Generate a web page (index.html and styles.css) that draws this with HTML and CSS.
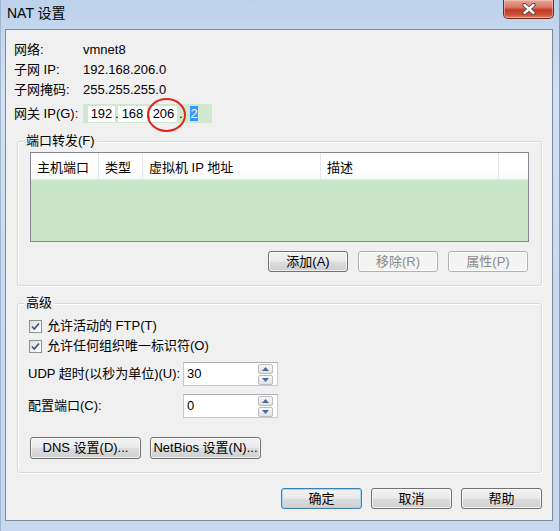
FILE: index.html
```html
<!DOCTYPE html>
<html lang="zh-CN">
<head>
<meta charset="utf-8">
<title>NAT 设置</title>
<link rel="stylesheet" href="styles.css">
</head>
<body>
<div class="window">
  <div class="titlebar">
    <span class="title">NAT 设置</span>
    <div class="close" aria-label="关闭">
      <svg width="16" height="12" viewBox="0 0 16 12">
        <path d="M3.5 2 L12.5 10 M12.5 2 L3.5 10" stroke="#5a3a36" stroke-width="4.2" stroke-linecap="round" fill="none"/>
        <path d="M3.5 2 L12.5 10 M12.5 2 L3.5 10" stroke="#ffffff" stroke-width="2.4" stroke-linecap="round" fill="none"/>
      </svg>
    </div>
  </div>
  <div class="client">
    <div class="info">
      <span class="lbl">网络:</span><span class="val">vmnet8</span>
      <span class="lbl">子网 IP:</span><span class="val">192.168.206.0</span>
      <span class="lbl">子网掩码:</span><span class="val">255.255.255.0</span>
      <span class="lbl gw">网关 IP(G):</span>
      <div class="ipfield">
        <span class="seg s1">192</span><span class="dot">.</span><span class="seg s2">168</span><span class="dot">.</span><span class="seg s3">206</span><span class="dot last">.</span><span class="sel">2</span>
        <span class="ring"></span>
      </div>
    </div>

    <div class="group g1">
      <span class="legend">端口转发(F)</span>
      <div class="lv">
        <div class="lv-head">
          <span class="col">主机端口</span>
          <span class="col">类型</span>
          <span class="col">虚拟机 IP 地址</span>
          <span class="col">描述</span>
          <span class="col last"></span>
        </div>
        <div class="lv-body"></div>
      </div>
      <div class="btnrow">
        <button class="btn w80">添加(A)</button>
        <button class="btn w80 disabled">移除(R)</button>
        <button class="btn w80 disabled">属性(P)</button>
      </div>
    </div>

    <div class="group g2">
      <span class="legend">高级</span>
      <div class="cb-row">
        <span class="cb"><svg width="11" height="11" viewBox="0 0 11 11"><path d="M2 5.5 L4.3 8 L9 2.5" stroke="#3f5488" stroke-width="1.8" fill="none"/></svg></span>
        <span>允许活动的 FTP(T)</span>
      </div>
      <div class="cb-row">
        <span class="cb"><svg width="11" height="11" viewBox="0 0 11 11"><path d="M2 5.5 L4.3 8 L9 2.5" stroke="#3f5488" stroke-width="1.8" fill="none"/></svg></span>
        <span>允许任何组织唯一标识符(O)</span>
      </div>
      <div class="spin-row first">
        <span class="spin-lbl">UDP 超时(以秒为单位)(U):</span>
        <div class="spin">
          <span class="spin-val">30</span>
          <div class="ud">
            <span class="udb"><svg width="7" height="4" viewBox="0 0 7 4"><path d="M0 4 L3.5 0 L7 4 Z" fill="#4a6aa5"/></svg></span>
            <span class="udb"><svg width="7" height="4" viewBox="0 0 7 4"><path d="M0 0 L3.5 4 L7 0 Z" fill="#4a6aa5"/></svg></span>
          </div>
        </div>
      </div>
      <div class="spin-row second">
        <span class="spin-lbl">配置端口(C):</span>
        <div class="spin">
          <span class="spin-val">0</span>
          <div class="ud">
            <span class="udb"><svg width="7" height="4" viewBox="0 0 7 4"><path d="M0 4 L3.5 0 L7 4 Z" fill="#4a6aa5"/></svg></span>
            <span class="udb"><svg width="7" height="4" viewBox="0 0 7 4"><path d="M0 0 L3.5 4 L7 0 Z" fill="#4a6aa5"/></svg></span>
          </div>
        </div>
      </div>
      <div class="dns-row">
        <button class="btn w111">DNS 设置(D)...</button>
        <button class="btn w111">NetBios 设置(N)...</button>
      </div>
    </div>

    <div class="footer">
      <button class="btn w81 default">确定</button>
      <button class="btn w81">取消</button>
      <button class="btn w81">帮助</button>
    </div>
  </div>
</div>
</body>
</html>
```

FILE: styles.css
```css
* { box-sizing: border-box; }
html, body { margin: 0; padding: 0; }
body {
  width: 560px;
  height: 531px;
  overflow: hidden;
  font-family: "Liberation Sans", "Noto Sans CJK SC", sans-serif;
  font-size: 13px;
  line-height: 16px;
  color: #000;
  background: linear-gradient(180deg, #bcd2eb 0%, #d2e2f4 18%, #c8daef 55%, #c6d9ee 100%);
}
.window {
  height: 531px;
  display: flex;
  flex-direction: column;
  border-left: 1px solid #9fb7d3;
  border-right: 1px solid #7f9bbf;
}
.titlebar {
  height: 29px;
  display: flex;
  align-items: flex-start;
  flex: none;
}
.title {
  padding-left: 6px;
  font-size: 14px;
  line-height: 27px;
}
.close {
  margin-left: auto;
  margin-right: 5px;
  width: 51px;
  height: 19px;
  border: 1px solid #6e2b22;
  border-top: none;
  border-radius: 0 0 5px 5px;
  background: linear-gradient(180deg, #e7a597 0%, #d97a66 40%, #c13a22 55%, #cf553b 85%, #e08a72 100%);
  box-shadow: inset 0 0 0 1px rgba(255, 220, 210, 0.45);
  display: flex;
  align-items: center;
  justify-content: center;
}
.client {
  margin-left: 4px;
  width: 548px;
  height: 492px;
  border: 1px solid #7c8b9b;
  background: #f0f0f0;
  padding-top: 10px;
  flex: none;
}
.info {
  display: grid;
  grid-template-columns: 69px auto;
  grid-template-rows: 20px 20px 20px 23px;
  align-items: center;
  padding-left: 8px;
  line-height: 20px;
}
.lbl.gw { align-self: end; line-height: 19px; }
.ipfield {
  align-self: end;
  position: relative;
  width: 129px;
  height: 19px;
  background: #cfe8cf;
  display: flex;
  align-items: center;
  padding-left: 5px;
  line-height: 16px;
}
.seg {
  background: #fff;
  height: 16px;
  text-align: center;
}
.s1 { width: 27px; }
.s2 { width: 29px; }
.s3 { width: 27px; }
.dot { width: 3px; text-align: center; }
.dot.last { width: 13px; text-align: left; padding-left: 2px; }
.sel {
  width: 8px;
  height: 15px;
  background: #3399ff;
  color: #fff;
  text-align: center;
  line-height: 15px;
}
.ring {
  position: absolute;
  left: 64px;
  top: -6px;
  width: 39px;
  height: 34px;
  border: 2.5px solid #e2231a;
  border-radius: 50%;
}
.group {
  position: relative;
  margin: 18px 10px 0 11px;
  border: 1px solid #d3dbe1;
  border-radius: 3px;
  box-shadow: inset 1px 1px 0 #fff, 1px 1px 0 #fff;
}
.legend {
  position: absolute;
  left: 6px;
  top: -10px;
  padding: 0 2px;
  background: #f0f0f0;
  line-height: 17px;
}
.g1 {
  height: 145px;
  padding: 10px 12px 0 12px;
}
.lv {
  height: 90px;
  border: 1px solid #828790;
  background: #c9e6c9;
  display: flex;
  flex-direction: column;
}
.lv-head {
  display: grid;
  grid-template-columns: 68px 44px 178px 178px 1fr;
  height: 27px;
  background: linear-gradient(180deg, #ffffff 0%, #ffffff 60%, #f7f8f9 100%);
  border-bottom: 1px solid #e2e6ea;
  flex: none;
}
.col {
  border-right: 1px solid #e3e6ea;
  padding-left: 6px;
  padding-top: 3px;
  display: flex;
  align-items: center;
}
.col.last { border-right: none; }
.btnrow {
  display: flex;
  justify-content: flex-end;
  gap: 10px;
  margin-top: 9px;
  padding-right: 1px;
}
.btn {
  height: 21px;
  border: 1px solid #707070;
  border-radius: 3px;
  background: linear-gradient(180deg, #f2f2f2 0%, #ebebeb 48%, #dddddd 52%, #cfcfcf 100%);
  box-shadow: inset 0 0 0 1px rgba(255, 255, 255, 0.7);
  font: inherit;
  line-height: 16px;
  padding: 0;
  color: #000;
}
.btn.disabled {
  border-color: #adb2b5;
  background: #f4f4f4;
  color: #8b8b8b;
}
.btn.default {
  border-color: #3c7fb1;
  box-shadow: inset 0 0 0 1px #9ed8f5;
}
.w80 { width: 80px; }
.w81 { width: 81px; }
.w111 { width: 111px; height: 22px; }
.g2 {
  margin-top: 17px;
  height: 170px;
  padding-top: 12px;
}
.cb-row {
  height: 20px;
  display: flex;
  align-items: center;
  padding-left: 11px;
  gap: 5px;
}
.cb {
  width: 13px;
  height: 13px;
  border: 1px solid #8e8f8f;
  background: linear-gradient(135deg, #dcdcdc 0%, #f4f4f4 60%, #ffffff 100%);
  display: flex;
  align-items: center;
  justify-content: center;
}
.spin-row {
  display: flex;
  align-items: center;
  padding-left: 10px;
}
.spin-row.first { margin-top: 6px; }
.spin-row.second { margin-top: 8px; }
.spin-lbl { width: 155px; }
.spin {
  width: 95px;
  height: 24px;
  border: 1px solid #c5c9ce;
  border-top-color: #abadb3;
  background: #fff;
  display: flex;
  align-items: center;
  padding-left: 3px;
}
.spin-val { flex: 1; }
.ud {
  display: flex;
  flex-direction: column;
  gap: 1px;
  margin-right: 4px;
}
.udb {
  width: 15px;
  height: 10px;
  border: 1px solid #b9bcc0;
  border-radius: 2px;
  background: linear-gradient(180deg, #f8f8f8, #e2e2e2);
  display: flex;
  align-items: center;
  justify-content: center;
}
.dns-row {
  display: flex;
  gap: 9px;
  margin-top: 19px;
  padding-left: 12px;
}
.footer {
  display: flex;
  justify-content: flex-end;
  gap: 9px;
  margin-top: 15px;
  padding-right: 10px;
}
```
